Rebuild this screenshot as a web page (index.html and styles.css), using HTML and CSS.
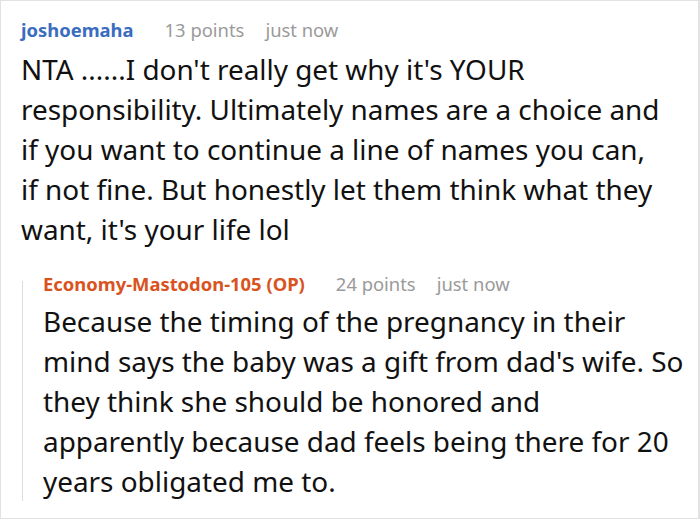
FILE: index.html
```html
<!DOCTYPE html>
<html>
<head>
<meta charset="utf-8">
<link rel="stylesheet" href="styles.css">
</head>
<body>
<div class="thread">
  <div class="comment">
    <div class="meta">
      <span class="author">joshoemaha</span>
      <span class="points">13 points</span>
      <span class="time">just now</span>
    </div>
    <div class="text">NTA ......I don't really get why it's YOUR<br>responsibility. Ultimately names are a choice and<br>if you want to continue a line of names you can,<br>if not fine. But honestly let them think what they<br>want, it's your life lol</div>
  </div>
  <div class="reply">
    <div class="meta">
      <span class="author op">Economy-Mastodon-105 (OP)</span>
      <span class="points">24 points</span>
      <span class="time">just now</span>
    </div>
    <div class="text">Because the timing of the pregnancy in their<br>mind says the baby was a gift from dad's wife. So<br>they think she should be honored and<br>apparently because dad feels being there for 20<br>years obligated me to.</div>
  </div>
</div>
</body>
</html>
```
FILE: styles.css
```css
html, body {
  margin: 0;
  padding: 0;
  background: #fff;
}
.thread {
  box-sizing: border-box;
  width: 700px;
  height: 519px;
  border: 1px solid #e2e2e2;
  border-right-width: 2px;
  padding: 17px 10px 0 20px;
  font-family: "Noto Sans", sans-serif;
  color: #111;
}
.meta {
  font-size: 18.4px;
  line-height: 24px;
  display: flex;
  gap: 21px;
}
.author {
  font-weight: 700;
  color: #3a6cc0;
  margin-right: 10px;
}
.author.op {
  color: #d9531e;
}
.points, .time {
  color: #9a9a9a;
}
.text {
  font-size: 27.9px;
  line-height: 40px;
  margin-top: 7px;
  white-space: nowrap;
}
.reply {
  display: flex;
  flex-direction: column;
  margin: 32px 0 0 1px;
  border-left: 1px solid #ddd;
  padding-left: 20px;
}
.reply .meta {
  margin-top: -9px;
}
.reply .text {
  margin-top: 5px;
}
```
